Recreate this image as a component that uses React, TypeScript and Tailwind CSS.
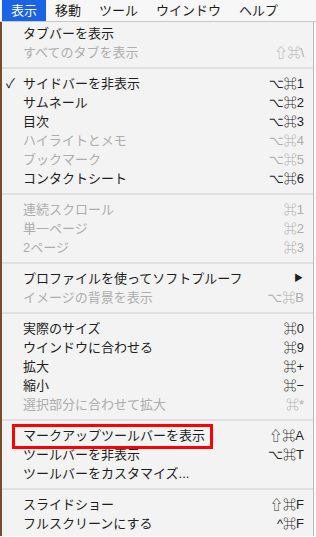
import React from "react";

type Item =
  | { type: "sep" }
  | { type: "item"; label: string; sc?: string; disabled?: boolean; check?: boolean; sub?: boolean };

const items: Item[] = [
  { type: "item", label: "タブバーを表示" },
  { type: "item", label: "すべてのタブを表示", sc: "⇧⌘\\", disabled: true },
  { type: "sep" },
  { type: "item", label: "サイドバーを非表示", sc: "⌥⌘1", check: true },
  { type: "item", label: "サムネール", sc: "⌥⌘2" },
  { type: "item", label: "目次", sc: "⌥⌘3" },
  { type: "item", label: "ハイライトとメモ", sc: "⌥⌘4", disabled: true },
  { type: "item", label: "ブックマーク", sc: "⌥⌘5", disabled: true },
  { type: "item", label: "コンタクトシート", sc: "⌥⌘6" },
  { type: "sep" },
  { type: "item", label: "連続スクロール", sc: "⌘1", disabled: true },
  { type: "item", label: "単一ページ", sc: "⌘2", disabled: true },
  { type: "item", label: "2ページ", sc: "⌘3", disabled: true },
  { type: "sep" },
  { type: "item", label: "プロファイルを使ってソフトプルーフ", sub: true },
  { type: "item", label: "イメージの背景を表示", sc: "⌥⌘B", disabled: true },
  { type: "sep" },
  { type: "item", label: "実際のサイズ", sc: "⌘0" },
  { type: "item", label: "ウインドウに合わせる", sc: "⌘9" },
  { type: "item", label: "拡大", sc: "⌘+" },
  { type: "item", label: "縮小", sc: "⌘−" },
  { type: "item", label: "選択部分に合わせて拡大", sc: "⌘*", disabled: true },
  { type: "sep" },
  { type: "item", label: "マークアップツールバーを表示", sc: "⇧⌘A" },
  { type: "item", label: "ツールバーを非表示", sc: "⌥⌘T" },
  { type: "item", label: "ツールバーをカスタマイズ..." },
  { type: "sep" },
  { type: "item", label: "スライドショー", sc: "⇧⌘F" },
  { type: "item", label: "フルスクリーンにする", sc: "^⌘F" },
];

export default function App() {
  return (
    <div
      className="relative w-[316px] h-[537px] overflow-hidden bg-[#fbfbfb] text-[13px]"
      style={{ fontFamily: '"Liberation Sans", "Noto Sans CJK JP", "DejaVu Sans", sans-serif' }}
    >
      <div className="h-[22px] flex items-stretch pl-[2px] bg-[#f7f7f7] border-b border-[#c9c9c9] text-[#1e1e1e]">
        <div className="px-[9px] flex items-center bg-[#1b63e5] text-white">表示</div>
        <div className="px-[9px] flex items-center">移動</div>
        <div className="px-[9px] flex items-center">ツール</div>
        <div className="px-[9px] flex items-center">ウインドウ</div>
        <div className="px-[9px] flex items-center">ヘルプ</div>
      </div>
      <div className="flex h-[514px]">
        <div className="w-[2px] bg-[#7a4a28]" />
        <div className="w-[312px] bg-[#f3f3f3] border-r border-[#b9b9b9] pt-[2px]">
          {items.map((it, i) =>
            it.type === "sep" ? (
              <div key={i} className="h-[12px] flex items-center">
                <div className="h-[2px] w-full bg-[#e0e0e0]" />
              </div>
            ) : (
              <div
                key={i}
                className={`h-[19px] flex items-center pl-[4px] pr-[9px] ${
                  it.disabled ? "text-[#adadad]" : "text-[#1e1e1e]"
                }`}
              >
                <div className="w-[17px] text-[13px] leading-none">{it.check ? "✓" : ""}</div>
                <div className="flex-1 leading-none whitespace-nowrap">{it.label}</div>
                {it.sc && <div className="leading-none whitespace-nowrap">{it.sc}</div>}
                {it.sub && <div className="text-[9px] leading-none mr-[1px]">▶</div>}
              </div>
            )
          )}
        </div>
      </div>
      <div className="absolute left-[12px] top-[424px] w-[201px] h-[25px] border-[3px] border-[#ff0000]" />
    </div>
  );
}
